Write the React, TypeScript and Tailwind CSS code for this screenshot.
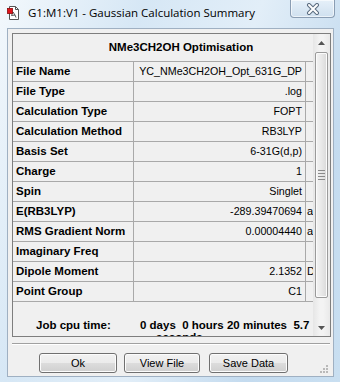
import React from "react"

const rows: [string, string, string][] = [
  ["File Name", "YC_NMe3CH2OH_Opt_631G_DP", ""],
  ["File Type", ".log", ""],
  ["Calculation Type", "FOPT", ""],
  ["Calculation Method", "RB3LYP", ""],
  ["Basis Set", "6-31G(d,p)", ""],
  ["Charge", "1", ""],
  ["Spin", "Singlet", ""],
  ["E(RB3LYP)", "-289.39470694", "a.u."],
  ["RMS Gradient Norm", "0.00004440", "a.u."],
  ["Imaginary Freq", "", ""],
  ["Dipole Moment", "2.1352", "Debye"],
  ["Point Group", "C1", ""],
]

function AppIcon() {
  return (
    <svg width="14" height="16" viewBox="0 0 14 16" className="shrink-0">
      <path d="M2.5 1.5h6l3 3v10h-9z" fill="#fff" stroke="#555" />
      <path d="M8.5 1.5v3h3" fill="none" stroke="#555" />
      <path d="M6 7l2 3M6 7l-1.5 3.5M8 10l-3.5 0.5M8 10l1 2.5" stroke="#444" strokeWidth="0.9" fill="none" />
      <rect x="0.5" y="3.5" width="5" height="5" fill="#e0141b" stroke="#8a0a0a" strokeWidth="0.8" />
    </svg>
  )
}

function CloseButton() {
  return (
    <div className="absolute top-0 left-[290px] w-[45px] h-[18px] rounded-b-[4px] border border-t-0 border-[#8a9db3] bg-[linear-gradient(#e6f0f9,#cfe0ef)] shadow-[inset_0_0_0_1px_rgba(255,255,255,0.6)] flex items-center justify-center">
      <svg width="14" height="12" viewBox="0 0 14 12">
        <path d="M3 2l8 8M11 2l-8 8" stroke="#5b6d80" strokeWidth="4" strokeLinecap="round" />
        <path d="M3 2l8 8M11 2l-8 8" stroke="#fff" strokeWidth="2" strokeLinecap="round" />
      </svg>
    </div>
  )
}

function Arrow({ up }: { up?: boolean }) {
  return (
    <svg width="7" height="4" viewBox="0 0 7 4">
      <path d={up ? "M0 4L3.5 0L7 4z" : "M0 0L3.5 4L7 0z"} fill="#555" />
    </svg>
  )
}

function ScrollBar() {
  return (
    <div className="w-[17px] flex flex-col bg-[linear-gradient(90deg,#e6e6e6,#f3f3f3_40%,#f3f3f3_60%,#e9e9e9)]">
      <div className="h-[17px] flex items-center justify-center pt-[1px]">
        <Arrow up />
      </div>
      <div className="h-[1px]" />
      <div className="ml-[2px] w-[13px] h-[246px] rounded-[2px] border border-[#9a9a9a] bg-[linear-gradient(90deg,#f4f4f4,#e8e8e8_50%,#d9d9d9)] shadow-[inset_0_0_0_1px_#fbfbfb] flex flex-col items-center justify-center gap-[2px]">
        <div className="w-[7px] h-[1px] bg-[#8a8a8a]" />
        <div className="w-[7px] h-[1px] bg-[#8a8a8a]" />
        <div className="w-[7px] h-[1px] bg-[#8a8a8a]" />
        <div className="w-[7px] h-[1px] bg-[#8a8a8a]" />
      </div>
      <div className="flex-1" />
      <div className="h-[17px] flex items-center justify-center">
        <Arrow />
      </div>
    </div>
  )
}

function Button({ label, w }: { label: string; w: string }) {
  return (
    <button
      className={`${w} h-[20px] rounded-[3px] border border-[#707070] bg-[linear-gradient(#f2f2f2,#ebebeb_50%,#dddddd_50%,#cfcfcf)] shadow-[inset_0_0_0_1px_#fcfcfc] text-[11px] text-black leading-none`}
    >
      {label}
    </button>
  )
}

export default function App() {
  return (
    <div
      className="relative w-[340px] h-[382px] overflow-hidden bg-[linear-gradient(110deg,#f3f8fc_0%,#d6e7f5_30%,#e2eef8_55%,#c4dbef_80%,#c9dff1_100%)] text-black"
      style={{ fontFamily: "'Liberation Sans', Arial, sans-serif" }}
    >
      {/* title bar */}
      <div className="h-[28px] flex items-center pl-[7px] pb-[2px]">
        <AppIcon />
        <span className="ml-[7px] text-[11.5px] text-black" style={{ fontFamily: "'Open Sans', 'Noto Sans', sans-serif" }}>
          G1:M1:V1 - Gaussian Calculation Summary
        </span>
      </div>
      <CloseButton />

      {/* client area */}
      <div className="ml-[7px] w-[327px] h-[349px] border border-[#9fb0c2] bg-[#f0f0f0] flex flex-col pl-[4px] pt-[4px]">
        <div className="w-[319px] h-[304px] border border-[#7e7e7e] flex">
          <div className="w-[300px] overflow-hidden flex flex-col">
            <div className="h-[28px] shrink-0 border-b border-[#a9a9a9] flex items-center justify-center pl-[36px] pt-[1px] text-[11.5px] font-bold">
              NMe3CH2OH Optimisation
            </div>
            {rows.map(([label, value, unit]) => (
              <div key={label} className="h-[20px] shrink-0 flex border-b border-[#a9a9a9]">
                <div className="w-[121px] border-r border-[#a9a9a9] pl-[3px] flex items-center text-[11.5px] font-bold whitespace-nowrap">
                  {label}
                </div>
                <div className="w-[172px] border-r border-[#a9a9a9] pr-[3px] flex items-center justify-end text-[10.7px] whitespace-nowrap">
                  {value}
                </div>
                <div className="flex-1 overflow-hidden pl-[1px] flex items-center text-[11px] whitespace-nowrap">
                  {unit}
                </div>
              </div>
            ))}
            <div className="pt-[17px] pl-[23px] flex text-[11.5px] font-bold leading-[12px]">
              <span className="w-[104px] shrink-0">Job cpu time:</span>
              <div className="flex flex-col">
                <span className="whitespace-pre">0 days  0 hours 20 minutes  5.7</span>
                <span className="pl-[16px]">seconds</span>
              </div>
            </div>
          </div>
          <ScrollBar />
        </div>

        {/* etched separator */}
        <div className="mt-[6px] w-[318px] h-[2px] border-t border-[#a0a0a0] border-b border-b-white" />

        {/* buttons */}
        <div className="mt-[7px] flex items-center pl-[27px]">
          <Button label="Ok" w="w-[78px]" />
          <div className="w-[7px]" />
          <Button label="View File" w="w-[76px]" />
          <div className="w-[9px]" />
          <Button label="Save Data" w="w-[79px]" />
          <div className="flex-1" />
          <svg width="10" height="10" viewBox="0 0 10 10" className="mt-[12px] mr-[4px]">
            <g fill="#b9b9b9">
              <rect x="7" y="1" width="2" height="2" />
              <rect x="4" y="4" width="2" height="2" />
              <rect x="7" y="4" width="2" height="2" />
              <rect x="1" y="7" width="2" height="2" />
              <rect x="4" y="7" width="2" height="2" />
              <rect x="7" y="7" width="2" height="2" />
            </g>
          </svg>
        </div>
      </div>
    </div>
  )
}
